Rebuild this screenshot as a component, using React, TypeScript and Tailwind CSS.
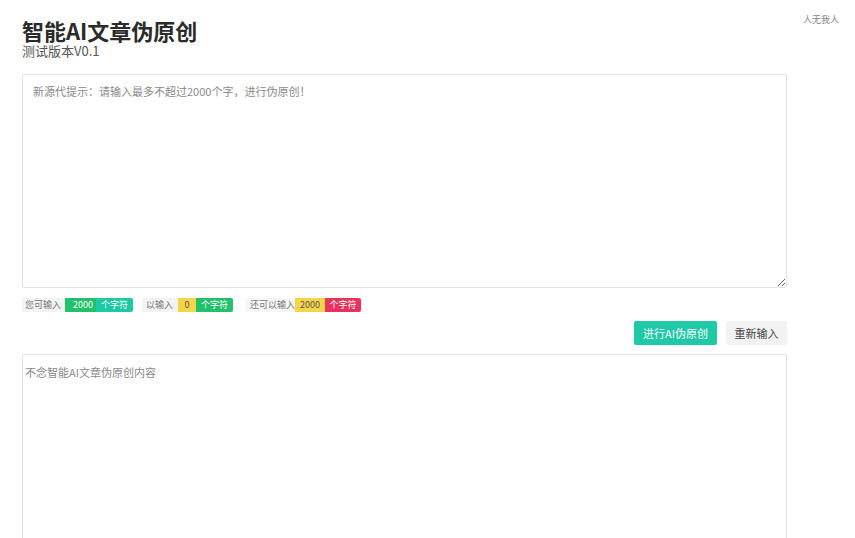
import React from "react";

export default function App() {
  const font = { fontFamily: '"Noto Sans CJK SC", "Noto Sans", sans-serif' };
  return (
    <div className="w-[855px] h-[538px] overflow-hidden bg-white flex items-start" style={font}>
      <div className="ml-[22px] w-[765px] shrink-0 flex flex-col">
        <h1 className="mt-[16px] text-[22px] leading-[28px] font-bold text-[#2b2b2b] shrink-0">智能AI文章伪原创</h1>
        <div className="text-[13px] leading-[14px] text-[#555] shrink-0">测试版本V0.1</div>
        <textarea
          className="mt-[16px] h-[214px] shrink-0 w-full border border-[#e3e3e3] rounded-[2px] pl-[10px] pt-[8px] text-[11px] leading-[16px] text-[#333] placeholder:text-[#8a8a8a] outline-none resize-y"
          placeholder="新源代提示：请输入最多不超过2000个字，进行伪原创！"
        />
        <div className="mt-[10px] shrink-0 flex items-center h-[14px] text-[9px] leading-[14px] whitespace-nowrap">
          <span className="px-[3px] bg-[#f3f3f3] text-[#777] rounded-l-[2px] w-[43px]">您可输入</span>
          <span className="bg-[#22c06b] text-white w-[31px] pl-[8px]">2000</span>
          <span className="bg-[#1bc9a2] text-white w-[37px] text-center rounded-r-[2px]">个字符</span>
          <span className="ml-[9px] px-[4px] bg-[#f3f3f3] text-[#777] w-[36px] rounded-l-[2px]">以输入</span>
          <span className="bg-[#f4d548] text-[#555] w-[18px] text-center">0</span>
          <span className="bg-[#22c06b] text-white w-[37px] text-center rounded-r-[2px]">个字符</span>
          <span className="ml-[12px] px-[5px] bg-[#f6f6f6] text-[#777] w-[50px] rounded-l-[2px]">还可以输入</span>
          <span className="bg-[#f4d548] text-[#555] w-[30px] text-center">2000</span>
          <span className="bg-[#e7335d] text-white w-[36px] text-center rounded-r-[2px]">个字符</span>
        </div>
        <div className="mt-[9px] shrink-0 flex justify-end gap-[9px]">
          <button className="h-[24px] w-[83px] rounded-[2px] bg-[#1fc9a6] text-white text-[11px]">进行AI伪原创</button>
          <button className="h-[24px] w-[61px] rounded-[2px] bg-[#f2f2f2] text-[#444] text-[11px]">重新输入</button>
        </div>
        <textarea
          className="mt-[9px] h-[220px] shrink-0 w-full border border-[#e3e3e3] rounded-[2px] pl-[2px] pt-[9px] text-[11px] leading-[16px] text-[#333] placeholder:text-[#8a8a8a] outline-none resize-none"
          placeholder="不念智能AI文章伪原创内容"
        />
      </div>
      <div className="ml-[16px] mt-[14px] text-[9px] leading-[12px] text-[#888] whitespace-nowrap">人无我人</div>
    </div>
  );
}
